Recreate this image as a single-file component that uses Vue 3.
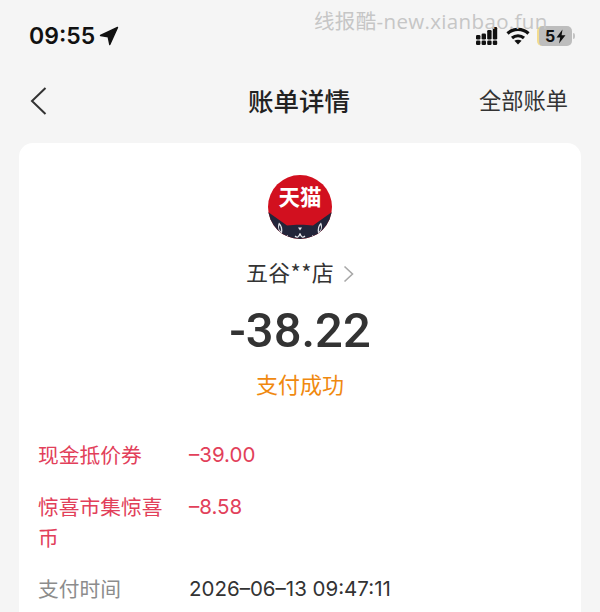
<template>
  <div class="page">
    <div class="watermark">线报酷-new.xianbao.fun</div>

    <div class="status-bar">
      <div class="status-left">
        <span class="time">09:55</span>
        <svg class="location" width="20" height="20" viewBox="0 0 20 20">
          <path d="M18.5 1.5 L1.5 9.5 L9.2 10.8 L10.8 18.5 Z" fill="#111" stroke="#111" stroke-width="1.4" stroke-linejoin="round" />
        </svg>
      </div>
      <div class="status-right">
        <svg width="25" height="20" viewBox="0 0 25 20" fill="#111">
          <rect x="0" y="9" width="4.4" height="4.4" rx="1.2" />
          <rect x="0" y="14.6" width="4.4" height="4.4" rx="1.2" />
          <rect x="5.6" y="7.5" width="4.4" height="5.9" rx="1.2" />
          <rect x="5.6" y="14.6" width="4.4" height="4.4" rx="1.2" />
          <rect x="11.2" y="4" width="4.4" height="9.4" rx="1.2" />
          <rect x="11.2" y="14.6" width="4.4" height="4.4" rx="1.2" />
          <rect x="16.8" y="1" width="4.4" height="12.4" rx="1.2" />
          <rect x="16.8" y="14.6" width="4.4" height="4.4" rx="1.2" />
        </svg>
        <svg class="wifi" width="24" height="18" viewBox="0 0 24 18" fill="none" stroke="#111" stroke-width="3.2">
          <path d="M1.5 6.5 C7.5 1 16.5 1 22.5 6.5" />
          <path d="M6 11 C9.5 8 14.5 8 18 11" />
          <path d="M12 17.5 L8.4 13.8 C10.4 12.4 13.6 12.4 15.6 13.8 Z" fill="#111" stroke="none" />
        </svg>
        <div class="battery">
          <div class="battery-body">
            <span>5</span>
            <svg width="10" height="15" viewBox="0 0 10 15">
              <path d="M6.5 0.5 L0.5 8.5 H4.2 L3 14.5 L9.5 6.2 H5.6 Z" fill="#111" />
            </svg>
          </div>
          <div class="battery-cap"></div>
        </div>
      </div>
    </div>

    <div class="nav">
      <svg class="back" width="18" height="30" viewBox="0 0 18 30" fill="none" stroke="#333" stroke-width="2">
        <path d="M15.5 2 L2 15 L15.5 28" />
      </svg>
      <div class="nav-title">账单详情</div>
      <div class="nav-link">全部账单</div>
    </div>

    <div class="card">
      <div class="logo">
        <svg width="64" height="64" viewBox="0 0 64 64">
          <defs>
            <clipPath id="logo-clip">
              <circle cx="32" cy="32" r="32" />
            </clipPath>
          </defs>
          <g clip-path="url(#logo-clip)">
            <rect width="64" height="64" fill="#d2101f" />
            <path d="M0 37 L19 50.5 C27 49.5 37 49.5 45 50.5 L64 37 V64 H0 Z" fill="#22253a" />
            <path d="M11 47.5 C14 50 15 54 14 58.5 C11 57 8.5 52 11 47.5 Z" fill="#dfe0e6" />
            <path d="M53 47.5 C50 50 49 54 50 58.5 C53 57 55.5 52 53 47.5 Z" fill="#dfe0e6" />
            <path d="M11.5 50 C12.8 52 13.2 54 12.8 56.5 C11.2 55.2 10.4 52.5 11.5 50 Z" fill="#22253a" />
            <path d="M52.5 50 C51.2 52 50.8 54 51.2 56.5 C52.8 55.2 53.6 52.5 52.5 50 Z" fill="#22253a" />
            <path d="M30 52.5 H34 L32 55.5 Z" fill="#e8e8ee" />
            <path d="M27 61 C29 63 31 62.5 32 58.5 C33 62.5 35 63 37 61" fill="none" stroke="#e8e8ee" stroke-width="1.2" />
            <path d="M15.5 64 L19.5 60 L21 64 Z" fill="#fff" />
            <path d="M48.5 64 L44.5 60 L43 64 Z" fill="#fff" />
          </g>
        </svg>
        <span class="logo-text">天猫</span>
      </div>

      <div class="store">
        <span class="store-name">五谷**店</span>
        <svg class="store-arrow" width="11" height="18" viewBox="0 0 11 18" fill="none" stroke="#a8a8a8" stroke-width="1.6">
          <path d="M1.5 1.5 L9.5 9 L1.5 16.5" />
        </svg>
      </div>
      <div class="amount">-38.22</div>
      <div class="state">支付成功</div>

      <div class="rows">
        <div v-for="row in rows" :key="row.label" class="row" :class="row.type">
          <div class="row-label">{{ row.label }}</div>
          <div class="row-value">{{ row.value }}</div>
        </div>
      </div>
    </div>
  </div>
</template>

<script setup>
const rows = [
  { label: '现金抵价券', value: '–39.00', type: 'discount' },
  { label: '惊喜市集惊喜币', value: '–8.58', type: 'discount' },
  { label: '支付时间', value: '2026–06–13 09:47:11', type: 'plain' },
]
</script>

<style>
html,
body {
  margin: 0;
  background: #f5f5f5;
}
</style>

<style scoped>
.page {
  position: relative;
  width: 600px;
  height: 612px;
  overflow: hidden;
  background: #f5f5f5;
  font-family: "Noto Sans CJK SC", "Liberation Sans", sans-serif;
  color: #333;
}

.watermark {
  position: absolute;
  top: 8px;
  left: 314px;
  font-family: "Open Sans", "Noto Sans CJK SC", sans-serif;
  font-size: 20.5px;
  line-height: 27px;
  letter-spacing: 0.35px;
  white-space: nowrap;
  color: #c6c6c6;
}

.status-bar {
  height: 72px;
  box-sizing: border-box;
  padding: 0 25px 0 29px;
  display: flex;
  align-items: center;
  justify-content: space-between;
}

.status-left {
  display: flex;
  align-items: center;
  gap: 4px;
}

.time {
  font-family: Inter, "Liberation Sans", sans-serif;
  font-size: 23px;
  font-weight: 600;
  color: #111;
}

.status-right {
  display: flex;
  align-items: center;
  gap: 5px;
}

.battery {
  display: flex;
  align-items: center;
  margin-left: 2px;
}

.battery-body {
  width: 35px;
  height: 20px;
  box-sizing: border-box;
  border-left: 2px solid #f3dc8e;
  border-radius: 5px;
  background: #bdbdbd;
  display: flex;
  align-items: center;
  justify-content: center;
  gap: 1px;
  font-family: Inter, "Liberation Sans", sans-serif;
  font-size: 16px;
  font-weight: 700;
  color: #111;
}

.battery-cap {
  width: 2px;
  height: 6px;
  margin-left: 1px;
  border-radius: 0 2px 2px 0;
  background: #c4c4c4;
}

.nav {
  height: 58px;
  padding: 0 32px 0 30px;
  display: flex;
  align-items: center;
  justify-content: space-between;
  position: relative;
}

.back {
  display: block;
}

.nav-title {
  position: absolute;
  left: 0;
  right: 2px;
  bottom: 11px;
  text-align: center;
  font-size: 25.5px;
  line-height: 38px;
  font-weight: 500;
  color: #222;
}

.nav-link {
  font-size: 22.25px;
  line-height: 32px;
  margin-bottom: 4px;
  color: #333;
}

.card {
  margin: 13px 19px 0;
  padding: 32px 20px 0;
  height: 520px;
  box-sizing: border-box;
  background: #fff;
  border-radius: 14px;
  display: flex;
  flex-direction: column;
  align-items: center;
}

.logo {
  position: relative;
  width: 64px;
  height: 64px;
}

.logo svg {
  display: block;
}

.logo-text {
  position: absolute;
  top: 5px;
  left: 0;
  right: 0;
  text-align: center;
  font-size: 21.5px;
  line-height: 32px;
  font-weight: 700;
  color: #fff;
}

.store {
  margin-top: 15px;
  height: 34px;
  display: flex;
  align-items: center;
  gap: 9px;
  font-size: 22px;
  color: #333;
}

.store-name {
  letter-spacing: 0.3px;
}

.store-arrow {
  margin-top: 6px;
}

.amount {
  margin-top: 11px;
  font-family: Roboto, "Liberation Sans", sans-serif;
  font-size: 49px;
  line-height: 64px;
  font-weight: 500;
  color: #333;
}

.state {
  margin-top: 2px;
  font-size: 22px;
  line-height: 36px;
  color: #f0890f;
}

.rows {
  align-self: stretch;
  margin-top: 38px;
  display: flex;
  flex-direction: column;
  gap: 20.5px;
}

.row {
  display: grid;
  grid-template-columns: 126px 1fr;
  gap: 25px;
  margin-left: -1px;
  line-height: 31px;
}

.row-label {
  font-size: 20.75px;
}

.row-value {
  font-family: Inter, "Liberation Sans", sans-serif;
  font-size: 20.5px;
}

.discount {
  color: #e2405a;
}

.plain .row-label {
  color: #8c8c8c;
}

.plain .row-value {
  color: #333;
}
</style>
